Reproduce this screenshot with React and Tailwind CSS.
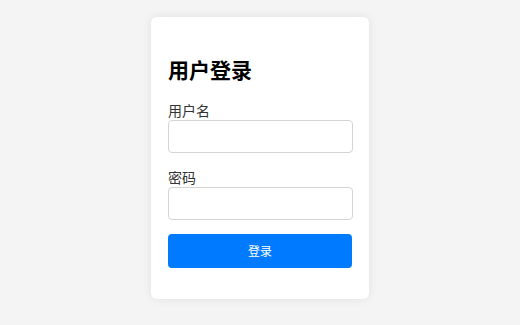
export default function App() {
    return (
        <div className="min-h-screen bg-[#f4f4f4] pt-[17px] font-['Noto_Sans_CJK_SC',sans-serif]">
            <div className="mx-auto w-[218px] rounded-md bg-white pl-[17px] pr-[16px] pt-[38px] pb-[31px] shadow-[0_0_10px_rgba(0,0,0,0.08)]">
                <h2 className="text-[21px] font-bold leading-[28px] text-black">用户登录</h2>

                {/* USERNAME */}
                <div className="mt-[17px]">
                    <label className="block text-[14px] leading-[20px] text-[#333]">用户名</label>
                    <input
                        type="text"
                        className="block h-[33px] w-[185px] rounded border border-[#d4d4d4] bg-white px-2 outline-none"
                    />
                </div>

                {/* PASSWORD */}
                <div className="mt-[14px]">
                    <label className="block text-[14px] leading-[20px] text-[#333]">密码</label>
                    <input
                        type="password"
                        className="block h-[33px] w-[185px] rounded border border-[#d4d4d4] bg-white px-2 outline-none"
                    />
                </div>

                <button className="mt-[14px] block h-[34px] w-[184px] rounded bg-[#007bff] text-[12px] text-white">
                    登录
                </button>
            </div>
        </div>
    );
}
